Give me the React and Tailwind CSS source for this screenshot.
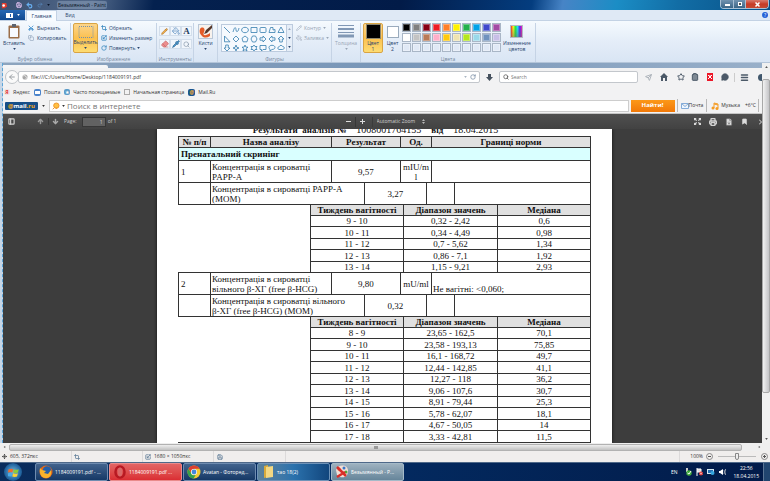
import React from "react";
import {
  Printer, Bookmark, Search, Menu, Home, Star, Send, ArrowDown, ArrowUp,
  Scissors, Copy, Crop, Scaling, RotateCw, Pencil, Eraser, Pipette, PaintBucket,
  PanelLeft, FileDown, Clipboard, MessageCircle, Save, Undo2, Redo2, Move,
} from "lucide-react";

const SHAPES = [
  "M1 1L7 7", "M1 6C3-1 4 2 4 4S6 7 7 2", "M4 1.3C8.500 1.300 8.500 6.700 4 6.700S-.5 1.300 4 1.300Z", "M1 1.500H7V6.500H1Z",
  "M2 1.500H6Q7 1.500 7 2.500V5.500Q7 6.500 6 6.500H2Q1 6.500 1 5.500V2.500Q1 1.500 2 1.500Z", "M1 6.500L2.500 1.500H5V4L7 3.500V6.500Z", "M4 1L7 6.500H1Z",
  "M1.500 1V6.800H7Z", "M4 1L7 4L4 7L1 4Z", "M4 1L7 3.300L6 6.800H2L1 3.300Z", "M2.500 1H5.500L7 4L5.500 7H2.500L1 4Z",
  "M1 2.800H4V1L7 4L4 7V5.200H1Z", "M7 2.800H4V1L1 4L4 7V5.200H7Z", "M2.700 7V4H1L4 1L7 4H5.300V7Z",
  "M2.700 1V4H1L4 7L7 4H5.300V1Z", "M4 1L4.800 3.200L7 4L4.800 4.800L4 7L3.200 4.800L1 4L3.200 3.200Z",
  "M4 1L4.900 3.100L7 3.200L5.300 4.600L6 7L4 5.600L2 7L2.700 4.600L1 3.200L3.100 3.100Z", "M4 1L5 2.500H7L6 4L7 5.500H5L4 7L3 5.500H1L2 4L1 2.500H3Z",
  "M1 1.500H7V5.500H4L2.500 7V5.500H1Z", "M4 1.300C8 1.300 8 5.500 4 5.500L2 7V5.200C0 4 1 1.300 4 1.300Z", "M2 5.500C0 5 1 2.500 2.200 2.700C3 .8 5 1 5.500 2.400C8 2.500 7.500 5.500 5.500 5.500Z",
];

const COLORS = [
  "#000000", "#7f7f7f", "#880015", "#ed1c24", "#ff7f27", "#fff200", "#22b14c", "#00a2e8", "#3f48cc", "#a349a4",
  "#ffffff", "#c3c3c3", "#b97a57", "#ffaec9", "#ffc90e", "#efe4b0", "#b5e61d", "#99d9ea", "#7092be", "#c8bfe7",
  "#e0e9f6", "#e0e9f6", "#e0e9f6", "#e0e9f6", "#e0e9f6", "#e0e9f6", "#e0e9f6", "#e0e9f6", "#e0e9f6", "#e0e9f6",
];

const PAPP = [
  ["9 - 10", "0,32 - 2,42", "0,6"], ["10 - 11", "0,34 - 4,49", "0,98"], ["11 - 12", "0,7 - 5,62", "1,34"],
  ["12 - 13", "0,86 - 7,1", "1,92"], ["13 - 14", "1,15 - 9,21", "2,93"],
];
const HCG = [
  ["8 - 9", "23,65 - 162,5", "70,1"], ["9 - 10", "23,58 - 193,13", "75,85"], ["10 - 11", "16,1 - 168,72", "49,7"],
  ["11 - 12", "12,44 - 142,85", "41,1"], ["12 - 13", "12,27 - 118", "36,2"], ["13 - 14", "9,06 - 107,6", "30,7"],
  ["14 - 15", "8,91 - 79,44", "25,3"], ["15 - 16", "5,78 - 62,07", "18,1"], ["16 - 17", "4,67 - 50,05", "14"],
  ["17 - 18", "3,33 - 42,81", "11,5"],
];

function Caret({ className = "" }) {
  return <svg viewBox="0 0 4 3" className={`h-[2px] w-[3px] shrink-0 ${className}`}><path d="M0 0H4L2 3Z" fill="currentColor" /></svg>;
}

function Group({ label, className = "", children }) {
  return (
    <section className={`flex h-[39px] shrink-0 flex-col border-r border-[#c5d3e5] ${className}`}>
      <div className="flex h-[33px] shrink-0 items-start">{children}</div>
      <span className="h-[6px] text-center leading-[6px] text-[#76879d]">{label}</span>
    </section>
  );
}

function TitleBar() {
  return (
    <header className="flex h-[10px] shrink-0 items-center bg-[linear-gradient(100deg,#3a4f70_0,#52698a_12%,#04214f_20%,#021b48_52%,#043d7f_69%,#4784c6_73%,#1b8dc5_80%,#126da5_88%,#075087_100%)] text-[#0a1628]">
      <svg viewBox="0 0 8 8" className="ml-px size-[7px]"><path d="M1 1H6L7 5L4 7H1Z" fill="#e33c2d" /><circle cx="3" cy="4" r="1.500" fill="#fff" /></svg>
      <Save className="ml-2 size-[6px] text-[#d6b9e8]" strokeWidth={4} />
      <Undo2 className="ml-1 size-[7px] text-[#68aef0]" strokeWidth={4} />
      <Redo2 className="ml-1 size-[6px] text-[#5683b4]" strokeWidth={3} />
      <Caret className="ml-1" />
      <h1 className="ml-[7px] rounded-xs bg-[#8fa4bd]/50 px-px leading-[8px] font-medium">Безымянный - Paint</h1>
      <div className="mr-px ml-auto flex h-[9px] self-start overflow-hidden rounded-b-sm border border-t-0 border-[#a9c0d4]">
        <button aria-label="Свернуть" className="flex w-[13px] items-center justify-center border-r border-[#a9c0d4] bg-linear-to-b from-[#7193b0] to-[#3c6687]"><span className="mt-0.5 h-[2px] w-[5px] bg-white" /></button>
        <button aria-label="Развернуть" className="flex w-[12px] items-center justify-center border-r border-[#a9c0d4] bg-linear-to-b from-[#7193b0] to-[#3c6687]"><span className="size-[4px] border border-white bg-[#555]" /></button>
        <button aria-label="Закрыть" className="flex w-[22px] items-center justify-center bg-linear-to-b from-[#d97a6c] via-[#c73b26] to-[#c64a31]"><svg viewBox="0 0 5 5" className="size-[5px]"><path d="M.5.5L4.500 4.500M4.500.5L.5 4.500" stroke="#fff" strokeWidth="1.500" /></svg></button>
      </div>
    </header>
  );
}

function TabRow() {
  return (
    <nav className="flex h-[11px] shrink-0 items-stretch border-b border-[#c3d2e4] bg-[#dfe9f5]">
      <button aria-label="Файл" className="flex w-[25px] items-center justify-center gap-1 bg-linear-to-b from-[#2668b4] to-[#104990] text-white">
        <svg viewBox="0 0 7 5" className="h-[5px] w-[7px]"><path d="M0 0H7V5H0Z" fill="#fff" /><path d="M4.500 1V4" stroke="#1b59a6" /></svg><Caret />
      </button>
      <button className="-mb-px ml-px w-[31px] border-x border-t border-[#c3d2e4] bg-[#f7fbff] text-[#28446d]">Главная</button>
      <button className="w-[26px] text-[#28446d]">Вид</button>
      <button aria-label="Справка" className="mr-[2px] ml-auto flex size-[6px] items-center justify-center self-center rounded-full bg-[#2461d8] text-white">?</button>
    </nav>
  );
}

function Ribbon() {
  return (
    <div className="flex h-[42px] shrink-0 overflow-hidden border-b border-[#b4c5d9] bg-linear-to-b from-[#f5fafe] via-[#e4edf8] to-[#d9e5f4] pt-[2px] text-[#28446d]">
      <Group label="Буфер обмена" className="w-[71px]">
        <button className="flex h-[30px] w-[28px] shrink-0 flex-col items-center pt-px">
          <svg viewBox="0 0 12 15" className="h-[15px] w-[12px]"><rect x=".5" y="1.500" width="11" height="13" rx="1" fill="#9b6e49" /><path d="M2 4H10V13H2Z" fill="#f7faff" /><path d="M4 0H8V3H4Z" fill="#5b6470" /></svg>
          <span className="mt-px leading-[7px]">Вставить</span><Caret className="mt-px" />
        </button>
        <div className="flex flex-col">
          <button className="flex h-[10px] items-center gap-[3px]"><Scissors className="size-[6px] -rotate-90 text-[#2f86c8]" strokeWidth={3} />Вырезать</button>
          <button className="flex h-[10px] items-center gap-[3px]"><Copy className="size-[6px] text-[#7d93ad]" />Копировать</button>
        </div>
      </Group>
      <Group label="Изображение" className="w-[86px]">
        <button className="ml-[2px] flex h-[30px] w-[25px] shrink-0 flex-col items-center rounded-xs border border-[#d9a443] bg-linear-to-b from-[#fcd58a] via-[#fbc04e] to-[#fddc72] pt-[2px]">
          <svg viewBox="0 0 16 12" className="h-[12px] w-[16px]"><rect x="1" y=".5" width="14" height="11" fill="none" stroke="#7690a8" strokeDasharray="1 1" /></svg>
          <span className="mt-px leading-[7px]">Выделить</span><Caret className="mt-px" />
        </button>
        <div className="ml-[3px] flex flex-col whitespace-nowrap">
          <button className="flex h-[10px] items-center gap-[2px]"><Crop className="size-[6px] text-[#3887bd]" strokeWidth={3} />Обрезать</button>
          <button className="flex h-[10px] items-center gap-[2px]"><Scaling className="size-[6px] text-[#3887bd]" strokeWidth={3} />Изменить размер</button>
          <button className="flex h-[10px] items-center gap-[2px]"><RotateCw className="size-[6px] text-[#3887bd]" strokeWidth={3} />Повернуть <Caret /></button>
        </div>
      </Group>
      <Group label="Инструменты" className="w-[37px]">
        <div className="mt-[3px] ml-[2px] grid grid-cols-3 gap-y-[3px]">
          {[
            ["Карандаш", <Pencil className="size-[7px] fill-[#f0b04a] text-[#a8753a]" />],
            ["Заливка", <PaintBucket className="size-[8px] text-[#5186bb]" />],
            ["Текст", <b className="font-['Liberation_Serif',serif] text-[9px] leading-[9px] text-[#26405f]">A</b>],
            ["Ластик", <Eraser className="size-[8px] fill-[#ec8d8d] text-[#c76666]" />],
            ["Пипетка", <Pipette className="size-[8px] fill-[#4c99cc] text-[#2d6593]" />],
            ["Масштаб", <Search className="size-[7px] text-[#75889c]" />],
          ].map(([name, icon]) => (
            <button key={name} aria-label={name} className="flex h-[10px] w-[11px] items-center justify-center border border-[#d3deeb] bg-[#f1f6fc]">{icon}</button>
          ))}
        </div>
      </Group>
      <Group className="w-[24px]">
        <button className="flex h-[30px] w-full flex-col items-center pt-px">
          <svg viewBox="0 0 15 15" className="size-[15px]"><rect x=".5" y=".5" width="14" height="14" fill="#f7f2ed" stroke="#bac8d8" /><path d="M2 5C4 2 8 4 6 8S8 12 12 9L12 12C9 14 6 14 4 12S1 8 2 5Z" fill="#e35b28" /><path d="M14 1L8 6L6 10L9 9L14 4Z" fill="#55372a" /></svg>
          <span className="mt-px leading-[7px]">Кисти</span><Caret className="mt-px" />
        </button>
      </Group>
      <Group label="Фигуры" className="w-[114px]">
        <div className="mt-px ml-[3px] flex h-[28px] shrink-0 border border-[#bccbde] bg-[#f5f9fe]">
          <div className="grid grid-cols-7">
            {SHAPES.map((d, i) => (
              <button key={i} aria-label={`Фигура ${i + 1}`} className="flex h-[9px] w-[9px] items-center justify-center">
                <svg viewBox="0 0 8 8" className="size-[8px]"><path d={d} fill="none" stroke="#357daf" strokeWidth=".8" /></svg>
              </button>
            ))}
          </div>
          <div className="ml-px flex w-[6px] flex-col items-center justify-around border-l border-[#bccbde] bg-[#e6eef8]">
            <Caret className="rotate-180 opacity-40" /><Caret /><Caret />
          </div>
        </div>
        <div className="ml-[3px] flex flex-col text-[#98a5b6]">
          <button className="flex h-[10px] items-center gap-[2px]"><Pencil className="size-[6px]" />Контур <Caret /></button>
          <button className="flex h-[10px] items-center gap-[2px]"><PaintBucket className="size-[6px]" />Заливка <Caret /></button>
        </div>
      </Group>
      <Group className="w-[29px]">
        <button className="flex h-[30px] w-full flex-col items-center pt-[2px] text-[#98a5b6]">
          <svg viewBox="0 0 16 13" className="h-[13px] w-[16px]"><path d="M0 .5H16" stroke="#8198b5" /><path d="M0 4H16" stroke="#8198b5" strokeWidth="2" /><path d="M0 7.500H16" stroke="#8198b5" /><path d="M0 11H16" stroke="#8198b5" strokeWidth="3" /></svg>
          <span className="mt-[2px] leading-[7px]">Толщина</span><Caret className="mt-px" />
        </button>
      </Group>
      <Group label="Цвета" className="w-[175px]">
        <button className="ml-[2px] flex h-[30px] w-[20px] shrink-0 flex-col items-center rounded-xs border border-[#d9a443] bg-linear-to-b from-[#fcd58a] via-[#fbc04e] to-[#fddc72] leading-[6px]">
          <span className="mb-px size-[15px] shrink-0 border border-[#8f886e] bg-black" />Цвет<br />1
        </button>
        <button className="flex h-[30px] w-[19px] shrink-0 flex-col items-center pt-[3px] leading-[6px]">
          <span className="mb-[2px] size-[12px] shrink-0 border border-[#9aabbd] bg-white" />Цвет<br />2
        </button>
        <div className="grid grid-cols-10 gap-px">
          {COLORS.map((c, i) => (
            <button key={i} aria-label={`Цвет ${c}`} className="size-[9px] border border-[#a9b6c6] shadow-[inset_0_0_0_1px_#ffffff50]" style={{ backgroundColor: c }} />
          ))}
        </div>
        <button className="ml-[2px] flex h-[30px] shrink-0 flex-col items-center pt-[2px] leading-[6px]">
          <span className="mb-[2px] size-[13px] shrink-0 border border-[#b3bac4] bg-[linear-gradient(to_bottom,#ffffff20,#77777790),linear-gradient(to_right,red,#ff0,#0e2,#0df,#30f,#f0a)]" />
          Изменение<br />цветов
        </button>
      </Group>
    </div>
  );
}

function BrowserBars() {
  return (
    <div className="shrink-0 bg-[#f2f2f3] text-[#333]">
      <div className="flex h-[5px] items-end bg-linear-to-r from-[#8da4be] via-[#7896b8] to-[#98afc9]"><span className="h-[3px] w-[105px] rounded-tr-xs bg-[#f4f5f7]" /></div>
      <div className="flex h-[18px] items-center pl-[2px]">
        <button aria-label="Назад" className="z-10 -mr-px flex size-[14px] items-center justify-center rounded-full border border-[#c0c4c8] bg-[#fafafa]"><ArrowUp className="size-[8px] -rotate-90 text-[#9a9fa4]" strokeWidth={3} /></button>
        <div className="flex h-[12px] flex-1 items-center rounded-xs border border-[#c3c7cc] bg-white px-[3px]">
          <svg viewBox="0 0 7 7" className="mr-[3px] size-[6px]"><circle cx="3.500" cy="3.500" r="3" fill="#a7a7a7" /><path d="M1 3L3 1L4 3L6 4L4 6" fill="none" stroke="#eee" /></svg>
          <input aria-label="Адрес" defaultValue="file:///C:/Users/Home/Desktop/1184009191.pdf" className="min-w-0 flex-1 outline-none" />
          <Caret className="mr-[3px] text-[#aab5c2]" /><RotateCw className="size-[6px] text-[#7a8ea5]" strokeWidth={3} />
        </div>
        <svg viewBox="0 0 7 7" className="mx-[6px] size-[7px]"><path d="M2 0H5V3H7L3.500 7L0 3H2Z" fill="#46515e" /></svg>
        <label className="flex h-[12px] w-[139px] items-center gap-[2px] rounded-xs border border-[#c3c7cc] bg-white px-[3px]">
          <Search className="size-[6px] text-[#555]" strokeWidth={3} /><input aria-label="Search" placeholder="Search" className="min-w-0 flex-1 outline-none placeholder:text-[#777]" />
        </label>
        <div className="flex w-[124px] items-center overflow-hidden pl-[7px] text-[#4b5968]">
          <button aria-label="Отправить"><Send className="size-[7px] text-[#a6adb5]" strokeWidth={3} /></button>
          <button aria-label="Домой" className="ml-[8px]"><svg viewBox="0 0 8 8" className="size-[8px]"><path d="M4 0L8 4H7V8H5V5H3V8H1V4H0Z" fill="#4b5968" /></svg></button>
          <button aria-label="Закладка" className="ml-[9px]"><Star className="size-[8px]" strokeWidth={3} /></button>
          <button aria-label="Список" className="ml-[6px]"><Clipboard className="size-[8px] fill-[#7e8994]" strokeWidth={3} /></button>
          <button aria-label="Расширение" className="ml-[8px] flex size-[8px] items-center justify-center bg-[#ed1728]"><svg viewBox="0 0 6 6" className="size-[6px]"><path d="M1 5L5 1M1 1L5 5M3 1V3" stroke="#fff" fill="none" /></svg></button>
          <button aria-label="Чат" className="ml-[8px]"><MessageCircle className="size-[8px] fill-[#4b5968]" /></button>
          <button aria-label="Меню" className="ml-[5px] border-l border-[#ccc] pl-[5px]"><Menu className="size-[9px]" strokeWidth={4} /></button>
          <span className="ml-[9px] size-[7px] shrink-0 rounded-full bg-[#40576c]" />
        </div>
      </div>
      <div className="flex h-[12px] items-center gap-[4px] pl-px">
        <a href="#ya" className="flex items-center gap-[3px]"><b className="flex size-[6px] items-center justify-center rounded-xs bg-[#eee4e4] text-[#e43232]">Я</b>Яндекс</a>
        <a href="#mail" className="flex items-center gap-[3px]"><span className="flex size-[7px] items-center justify-center rounded-xs bg-[#4a83cb]"><span className="h-[3px] w-[5px] bg-white" /></span>Пошта</a>
        <a href="#top" className="flex items-center gap-[3px]"><span className="flex size-[6px] items-center justify-center rounded-xs bg-[#5c9cc9] text-white">★</span>Часто посещаемые</a>
        <a href="#home" className="flex items-center gap-[3px]"><span className="size-[6px] border border-dashed border-[#aaa]" />Начальная страница</a>
        <a href="#mailru" className="flex items-center gap-[3px]"><b className="flex size-[7px] items-center justify-center rounded-xs bg-[#195691] text-[#f5b034]">@</b>Mail.Ru</a>
      </div>
      <div className="flex h-[16px] items-center border-b border-[#c5c5c5] pl-[2px]">
        <a href="#mailru" className="flex h-[8px] w-[33px] items-center justify-center rounded-[1px] bg-[#174f88] text-[6px] leading-[8px] font-bold text-white"><span className="text-[#f7a91b]">@</span>mail<span className="text-[#f7a91b]">.ru</span></a>
        <Caret className="mx-[4px]" />
        <div className="flex h-[12px] min-w-0 flex-1 items-center border border-[#cdcdcd] bg-white pl-[2px]">
          <Search className="size-[8px] rotate-90 fill-[#ffc143] text-[#ee9630]" strokeWidth={3} /><Caret className="mx-[2px]" />
          <input aria-label="Поиск" placeholder="Поиск в интернете" className="min-w-0 flex-1 text-[8px] leading-[10px] outline-none placeholder:text-[#777]" />
        </div>
        <button className="ml-[2px] h-[12px] w-[44px] bg-linear-to-b from-[#fc9818] to-[#f17807] text-[6px] font-bold text-white">Найти!</button>
        <div className="ml-[2px] flex h-[13px] items-center border-l border-[#b8b8b8] pl-[3px]">
          <svg viewBox="0 0 8 6" className="h-[6px] w-[8px]"><path d="M.5.5H7.500V5.500H.5ZL4 3.500L7.500.5" fill="#eef6ff" stroke="#84acd9" /></svg>Почта
        </div>
        <div className="ml-[3px] flex h-[13px] items-center gap-[2px] border-l border-[#b8b8b8] pl-[4px]">
          <svg viewBox="0 0 8 8" className="size-[8px]"><path d="M3 6V1L7 2V6M3 2L7 3" stroke="#f59b22" fill="none" /><circle cx="2" cy="6" r="1.500" fill="#f59b22" /><circle cx="6" cy="6.500" r="1.500" fill="#f59b22" /></svg>Музыка<span className="ml-[3px]">+6°C</span>
        </div>
        <span className="ml-[2px] h-[13px] w-[4px] border-l border-[#b8b8b8]" />
      </div>
    </div>
  );
}

function PdfBar() {
  return (
    <div className="flex h-[15px] shrink-0 items-center bg-linear-to-b from-[#505050] to-[#424242] text-[#d2d2d2]">
      <div className="flex flex-1 items-center pl-[5px]">
        <button aria-label="Панель"><PanelLeft className="size-[7px]" strokeWidth={4} /></button>
        <button aria-label="Предыдущая" className="ml-[22px]"><ArrowUp className="size-[7px] text-[#9b9b9b]" strokeWidth={5} /></button>
        <button aria-label="Следующая" className="ml-[4px] border-l border-[#373737] pl-[3px]"><ArrowDown className="size-[7px] text-[#aaa]" strokeWidth={5} /></button>
        <label className="ml-[5px] flex items-center gap-[5px]">Page:<input aria-label="Page" defaultValue="1" className="h-[10px] w-[24px] border border-[#373737] bg-[#626262] px-[2px] text-right outline-none" /></label>
        <span className="ml-[2px]">of 1</span>
      </div>
      <div className="flex items-center">
        <button aria-label="Уменьшить" className="mr-[4px] h-[10px] border-r border-[#373737] pr-[4px]"><svg viewBox="0 0 5 5" className="size-[5px]"><path d="M0 2.500H5" stroke="#ddd" /></svg></button>
        <button aria-label="Увеличить" className="mr-[7px]"><svg viewBox="0 0 5 5" className="size-[5px]"><path d="M0 2.500H5M2.500 0V5" stroke="#ddd" /></svg></button>
        <select aria-label="Масштаб" className="h-[10px] appearance-none border-l border-[#3b3b3b] pl-[4px] outline-none"><option>Automatic Zoom</option></select>
        <svg viewBox="0 0 4 6" className="ml-[6px] h-[5px] w-[3px]"><path d="M0 2L2 0L4 2M0 4L2 6L4 4" fill="#ddd" /></svg>
      </div>
      <div className="flex flex-1 items-center justify-end gap-[8px] overflow-hidden">
        <button aria-label="Полный экран"><svg viewBox="0 0 8 8" className="size-[7px]"><path d="M0 3V0H3L2 1L3.500 2.500L2.500 3.500L1 2ZM5 0H8V3L7 2L5.500 3.500L4.500 2.500L6 1ZM0 5V8H3L2 7L3.500 5.500L2.500 4.500L1 6ZM8 5V8H5L6 7L4.500 5.500L5.500 4.500L7 6Z" fill="#ddd" /></svg></button>
        <button aria-label="Печать"><Printer className="size-[8px]" strokeWidth={4} /></button>
        <button aria-label="Скачать"><FileDown className="size-[8px] fill-[#ddd] stroke-[#777]" strokeWidth={2} /></button>
        <button aria-label="Закладка"><Bookmark className="size-[7px] fill-[#ddd]" /></button>
        <button aria-label="Инструменты" className="ml-[3px]"><svg viewBox="0 0 3 6" className="h-[6px] w-[3px]"><path d="M0 .5L2.500 3L0 5.500" fill="none" stroke="#ddd" /></svg></button>
      </div>
    </div>
  );
}

const LINE = "border border-[#333] p-0";

function NormRows({ rows }) {
  return (
    <>
      <tr className="h-[11px] text-center font-bold">
        <td colSpan={2} rowSpan={rows.length + 1} className="border-y border-[#333]" />
        <th colSpan={4} className={`${LINE} bg-[#e0e0e0]`}>Тиждень вагітності</th>
        <th colSpan={4} className={`${LINE} bg-[#e0e0e0]`}>Діапазон значень</th>
        <th className={`${LINE} bg-[#e0e0e0]`}>Медіана</th>
      </tr>
      {rows.map(([week, range, median]) => (
        <tr key={week} className="h-[11px] text-center odd:h-[12px]">
          <td colSpan={4} className={LINE}>{week}</td><td colSpan={4} className={LINE}>{range}</td><td className={LINE}>{median}</td>
        </tr>
      ))}
    </>
  );
}

function Result({ no, name, value, unit, norm }) {
  return (
    <tr className="h-[22px]">
      <td className={`${LINE} pl-[2px]`}>{no}</td>
      <td colSpan={2} className={`${LINE} pl-px`}>{name[0]}<br />{name[1]}</td>
      <td colSpan={2} className={`${LINE} text-center`}>{value}</td>
      <td colSpan={3} className={`${LINE} text-center`}>{unit}</td>
      <td colSpan={3} className={`${LINE} pl-px align-bottom`}>{norm}</td>
    </tr>
  );
}

function MomResult({ name, value }) {
  return (
    <tr className="h-[22px]">
      <td className={LINE} />
      <td colSpan={3} className={`${LINE} pl-px`}>{name[0]}<br />{name[1]}</td>
      <td colSpan={3} className={`${LINE} text-center`}>{value}</td>
      <td colSpan={2} className={LINE} /><td colSpan={2} className={LINE} />
    </tr>
  );
}

function Document() {
  return (
    <main className="flex min-h-0 flex-1 items-start justify-center overflow-hidden bg-[#3d3d3d] pl-[4px]">
      <article className="min-h-full bg-white px-[21px] font-['Liberation_Serif',serif] text-[9px] leading-[10px] text-[#111] shadow-[0_0_3px_#111]">
        <h2 className="-mt-[4px] flex h-[11px] justify-center gap-[10px] pr-[18px] text-[10px] whitespace-pre"><b className="text-[9px]">Результати  аналізів №</b><span>1008001764155</span><b className="text-[9px]">від</b><span>18.04.2015</span></h2>
        <table className="w-[413px] table-fixed border-collapse">
          <colgroup>
            <col className="w-[32px]" /><col className="w-[100px]" /><col className="w-[21px]" /><col className="w-[33px]" />
            <col className="w-[36px]" /><col className="w-[3px]" /><col className="w-[23px]" /><col className="w-[5px]" />
            <col className="w-[23px]" /><col className="w-[43px]" /><col className="w-[93px]" />
          </colgroup>
          <tbody>
            <tr className="h-[11px] bg-[#e0e0e0]">
              <th className={LINE}>№ п/п</th><th colSpan={2} className={LINE}>Назва аналізу</th><th colSpan={2} className={LINE}>Результат</th>
              <th colSpan={3} className={LINE}>Од.</th><th colSpan={3} className={LINE}>Границі норми</th>
            </tr>
            <tr className="h-[13px] bg-[#d9ffff]"><th colSpan={11} className={`${LINE} pl-[2px] text-left`}>Пренатальний скринінг</th></tr>
            <Result no="1" name={["Концентрація в сироватці", "PAPP-A"]} value="9,57" unit={<>mIU/m<br />l</>} />
            <MomResult name={["Концентрація в сироватці PAPP-A", "(МОМ)"]} value="3,27" />
            <NormRows rows={PAPP} />
            <Result no="2" name={["Концентрація в сироватці", "вільного β-ХГ (free β-HCG)"]} value="9,80" unit="mU/ml" norm="Не вагітні: <0,060;" />
            <MomResult name={["Концентрація в сироватці вільного", "β-ХГ (free β-HCG) (МОМ)"]} value="0,32" />
            <NormRows rows={HCG} />
          </tbody>
        </table>
      </article>
    </main>
  );
}

function StatusBar() {
  return (
    <footer className="flex h-[11px] shrink-0 items-center bg-[#f0eeed] text-[#333]">
      <span className="flex h-full w-[72px] items-center gap-[3px] border-r border-[#dcdada] pl-[2px]"><Move className="size-[5px]" strokeWidth={3} />605, 372пкс</span>
      <span className="flex h-full w-[71px] items-center border-r border-[#dcdada] pl-[2px]"><Crop className="size-[6px] text-[#607d98]" strokeWidth={3} /></span>
      <span className="flex h-full w-[71px] items-center gap-[3px] border-r border-[#dcdada] pl-[2px]"><Scaling className="size-[6px] text-[#607d98]" strokeWidth={3} />1680 × 1050пкс</span>
      <span className="flex h-full w-[72px] items-center border-r border-[#dcdada] pl-[3px]"><Save className="size-[6px] text-[#607d98]" strokeWidth={3} /></span>
      <div className="ml-auto flex h-full items-center gap-[3px] border-l border-[#dcdada] pr-[2px] pl-[10px]">
        100%
        <button aria-label="Уменьшить масштаб" className="flex size-[7px] items-center justify-center rounded-full border border-[#888]"><span className="h-px w-[3px] bg-[#555]" /></button>
        <input type="range" aria-label="Масштаб" className="mx-[2px] h-[7px] w-[38px] appearance-none bg-[linear-gradient(#bbb,#bbb)] bg-size-[100%_1px] bg-center bg-no-repeat [&::-webkit-slider-thumb]:h-[7px] [&::-webkit-slider-thumb]:w-[4px] [&::-webkit-slider-thumb]:appearance-none [&::-webkit-slider-thumb]:rounded-b-sm [&::-webkit-slider-thumb]:border [&::-webkit-slider-thumb]:border-[#888] [&::-webkit-slider-thumb]:bg-[#eee]" />
        <button aria-label="Увеличить масштаб" className="flex size-[7px] items-center justify-center rounded-full border border-[#888]"><svg viewBox="0 0 3 3" className="size-[3px]"><path d="M0 1.500H3M1.500 0V3" stroke="#555" /></svg></button>
      </div>
    </footer>
  );
}

function FirefoxLogo() {
  return <svg viewBox="0 0 14 14" className="size-[14px] shrink-0"><circle cx="7" cy="7" r="6.500" fill="#e66a17" /><circle cx="8" cy="5.500" r="4.300" fill="#245fa7" /><path d="M1 3L3 5L7 6L5 8L9 9L12 5C13 11 10 13 7 13C2 13 0 8 1 3Z" fill="#f8b32c" /></svg>;
}
function OperaLogo() {
  return <svg viewBox="0 0 14 14" className="size-[14px] shrink-0"><ellipse cx="7" cy="7" rx="4.500" ry="5.500" fill="none" stroke="#b71922" strokeWidth="2.500" /><ellipse cx="7" cy="7" rx="2.300" ry="4.500" fill="#d96969" /></svg>;
}
function ChromeLogo() {
  return <svg viewBox="0 0 14 14" className="size-[14px] shrink-0"><circle cx="7" cy="7" r="6.500" fill="#f4ca31" /><path d="M1.400 3.700A6.500 6.500 0 0 1 12.600 3.700H7A3.300 3.300 0 0 0 4 8Z" fill="#dd3f32" /><path d="M1.400 3.700A6.500 6.500 0 0 0 6.500 13.500L9 9.500A3 3 0 0 1 4 8Z" fill="#35a04b" /><circle cx="7" cy="7" r="3" fill="#fff" /><circle cx="7" cy="7" r="2.400" fill="#4387dc" /></svg>;
}
function FolderLogo() {
  return <svg viewBox="0 0 14 14" className="size-[14px] shrink-0"><path d="M3 1L7 0V12L3 13Z" fill="#d7aa3b" /><path d="M5 2L12 1V12L5 13Z" fill="#f3d882" /></svg>;
}
function PaintLogo() {
  return <svg viewBox="0 0 14 14" className="size-[14px] shrink-0"><path d="M1 5C3-1 13-1 13 6S6 14 2 10Z" fill="#f1ded5" /><circle cx="4" cy="4" r="1.500" fill="#de3429" /><circle cx="9" cy="3" r="1.500" fill="#3877c9" /><circle cx="11" cy="7" r="1.500" fill="#50a63a" /><path d="M2 2L11 11M2 12L10 7" stroke="#d92e28" strokeWidth="2.500" /></svg>;
}

const TASK = "flex h-[18px] w-[73px] shrink-0 items-center gap-[2px] overflow-hidden rounded-xs border pl-[3px] whitespace-nowrap text-white";

function Taskbar() {
  return (
    <div className="flex h-[19px] shrink-0 items-start overflow-hidden border-t border-[#4f6989] bg-linear-to-r from-[#0a2c5c] via-[#032a60] to-[#021b49] text-white">
      <button aria-label="Пуск" className="ml-[4px] flex size-[18px] items-center justify-center rounded-full bg-[radial-gradient(circle,#79b8d9_0%,#2467a2_60%,#0c3360_100%)]">
        <svg viewBox="0 0 10 10" className="size-[11px]"><path d="M.5 2Q3 1 4.700 2L4 5Q2 4 0 5Z" fill="#f26b2d" /><path d="M5.300 2Q7.500 3 9.800 2L9 5Q7 6 4.700 5Z" fill="#8ccb3b" /><path d="M0 5.700Q2 4.800 3.900 5.700L3.300 8.700Q1 8-.5 8.700Z" fill="#4dace8" /><path d="M4.600 5.700Q7 6.700 9 5.700L8.200 8.700Q6 9.500 3.900 8.700Z" fill="#fcd135" /></svg>
      </button>
      <div className="ml-[13px] flex gap-px">
        <button className={`${TASK} border-[#6f8cb0] bg-linear-to-b from-[#42638d] to-[#163966]`}><FirefoxLogo />1184009191.pdf - ...</button>
        <button className={`${TASK} border-[#e98b8b] bg-linear-to-b from-[#e36464] to-[#da2d33]`}><OperaLogo />1184009191.pdf ...</button>
        <button className={`${TASK} border-[#6f8cb0] bg-linear-to-b from-[#42638d] to-[#163966]`}><ChromeLogo />Avatan - Фоторед...</button>
        <button className={`${TASK} border-[#6f93b8] bg-linear-to-r from-[#5d829b] via-[#2b72ad] to-[#12467d]`}><FolderLogo />тао 18(2)</button>
        <button className={`${TASK} border-[#a5bac8] bg-linear-to-b from-[#9db1bf] to-[#66859a]`}><PaintLogo />Безымянный - P...</button>
      </div>
      <div className="ml-auto flex h-full items-center">
        <span className="mr-[7px]">EN</span>
        <div className="flex items-center gap-[4px]">
          <svg viewBox="0 0 7 8" className="h-[8px] w-[7px]"><path d="M1 0H3V4H1Z" fill="#ccc" /><circle cx="4" cy="5" r="2.700" fill="#40ae3b" /><path d="M2.500 5L4 6L6 3" stroke="#fff" fill="none" /></svg>
          <svg viewBox="0 0 7 8" className="h-[8px] w-[7px]"><path d="M1 0V8M1 1H5V4H1" stroke="#fff" fill="#ddd" /><circle cx="5" cy="5.500" r="2" fill="#dc2828" /><path d="M4 4.500L6 6.500M6 4.500L4 6.500" stroke="#fff" strokeWidth=".7" /></svg>
          <svg viewBox="0 0 8 8" className="h-[8px] w-[8px]"><path d="M0 1H7V6H0Z" fill="#d4e7f1" /><path d="M1 2H6V5H1Z" fill="#246eb2" /><circle cx="5.500" cy="5" r="2" fill="#35a6df" /></svg>
          <svg viewBox="0 0 7 8" className="h-[8px] w-[7px]"><path d="M0 3H1L4 1V7L1 5H0Z" fill="#fff" /><path d="M5 2Q6 4 5 6M6.300 1Q8 4 6.300 7" stroke="#ddd" fill="none" strokeWidth=".7" /></svg>
        </div>
        <div className="mr-[4px] ml-[8px] text-center leading-[8px]">22:56<br />18.04.2015</div>
        <button aria-label="Показать рабочий стол" className="h-full w-[7px] border-l border-[#5b7594] bg-[#21456f]" />
      </div>
    </div>
  );
}

export default function App() {
  return (
    <div className="flex h-screen flex-col overflow-hidden bg-[#f0f0f0] font-['Open_Sans','Noto_Sans',sans-serif] text-[5px] leading-[7px]">
      <TitleBar />
      <TabRow />
      <Ribbon />
      <div className="flex min-h-0 flex-1 bg-[#c6d6e7]">
        <div className="ml-[2px] flex min-w-0 flex-1 flex-col border-l border-dashed border-[#5ba4d8]">
          <BrowserBars />
          <PdfBar />
          <Document />
        </div>
        <div className="flex w-[8px] shrink-0 flex-col items-center bg-[#f0f0f0] py-[3px] text-[#555]">
          <Caret className="rotate-180" />
          <div className="mt-[11px] w-full flex-1 rounded-xs border border-[#a8a8a8] bg-linear-to-r from-[#f2f2f2] to-[#c4c4c7]" />
          <Caret className="mt-[45px]" />
        </div>
      </div>
      <div className="flex h-[8px] shrink-0 items-center bg-[#efefef] text-[#555]">
        <Caret className="mx-[3px] rotate-90" />
        <div className="flex h-[7px] flex-1 items-center justify-center rounded-xs border border-[#b2b2b2] bg-linear-to-b from-[#eee] to-[#c2c2c2]"><span className="h-[3px] w-[4px] bg-[#999]" /></div>
        <Caret className="mr-[9px] ml-[16px] -rotate-90" />
      </div>
      <StatusBar />
      <Taskbar />
    </div>
  );
}
